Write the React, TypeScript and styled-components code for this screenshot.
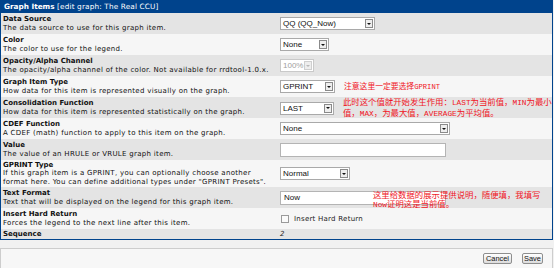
import styled, { createGlobalStyle } from "styled-components";

const GlobalStyle = createGlobalStyle`
  html, body {
    margin: 0;
    padding: 0;
  }
  body {
    width: 554px;
    height: 268px;
    overflow: hidden;
    background: #f1f1f1;
    font-family: "DejaVu Sans", Verdana, sans-serif;
  }
`;

const Page = styled.div`
  display: flex;
  flex-direction: column;
  gap: 8px;
  width: 553px;
  height: 268px;
  overflow: hidden;
`;

const Panel = styled.div`
  border: 1px solid #00438c;
  border-top: 0;
  display: flex;
  flex-direction: column;
`;

const Header = styled.div`
  height: 13px;
  line-height: 13px;
  padding: 0 3px;
  background: #00438c;
  color: #fff;
  font-size: 7.3px;
  letter-spacing: 0.15px;
  white-space: nowrap;

  b {
    font-weight: bold;
    letter-spacing: 0;
  }
`;

const Row = styled.div<{ $alt: boolean; $h: number }>`
  display: grid;
  grid-template-columns: 279px 1fr;
  align-items: center;
  height: ${(p) => p.$h}px;
  overflow: hidden;
  background: ${(p) => (p.$alt ? "#f6f6f6" : "#e4e4e4")};
`;

const LabelCell = styled.div`
  padding: 0 2px;
  font-size: 7px;
  line-height: 8.6px;
  color: #111;
  white-space: nowrap;
`;

const Title = styled.div`
  font-weight: bold;
`;

const Desc = styled.div`
  letter-spacing: 0.3px;
`;

const FieldCell = styled.div`
  position: relative;
  display: flex;
  align-items: center;
  gap: 9px;
  white-space: nowrap;
`;

const Select = styled.div<{ $w: number; $disabled?: boolean }>`
  box-sizing: border-box;
  width: ${(p) => p.$w}px;
  height: 13px;
  padding: 0 1px 0 2px;
  display: flex;
  align-items: center;
  border: 1px solid ${(p) => (p.$disabled ? "#c9c9c9" : "#a9a9a9")};
  background: #fff;
  color: ${(p) => (p.$disabled ? "#a0a0a0" : "#111")};
  font-family: "Liberation Sans", Arial, sans-serif;
  font-size: 8px;
`;

const Arrow = styled.span<{ $disabled?: boolean }>`
  box-sizing: border-box;
  margin-left: auto;
  width: 8px;
  height: 9px;
  display: flex;
  align-items: center;
  justify-content: center;
  border: 1px solid ${(p) => (p.$disabled ? "#cfcfcf" : "#8a8a8a")};
  background: #eeeeee;

  &::after {
    content: "";
    border-left: 2px solid transparent;
    border-right: 2px solid transparent;
    border-top: 2px solid ${(p) => (p.$disabled ? "#b8b8b8" : "#111")};
  }
`;

const TextBox = styled.div<{ $w: number }>`
  box-sizing: border-box;
  width: ${(p) => p.$w}px;
  height: 14px;
  padding: 0 3px;
  display: flex;
  align-items: center;
  border: 1px solid #b4b4b4;
  background: #fff;
  color: #111;
  font-family: "Liberation Sans", Arial, sans-serif;
  font-size: 8px;
`;

const Note = styled.div<{ $size: number }>`
  color: #f0141e;
  font-family: "Noto Sans CJK SC", sans-serif;
  font-size: ${(p) => p.$size}px;
  line-height: ${(p) => p.$size + 0.6}px;

  span {
    font-family: "Liberation Mono", monospace;
    font-size: ${(p) => p.$size - 0.6}px;
  }
`;

const OverNote = styled(Note)`
  position: absolute;
  left: 93px;
  top: -1px;
`;

const Check = styled.span`
  box-sizing: border-box;
  width: 8px;
  height: 8px;
  margin-left: 1px;
  border: 1px solid #9a9a9a;
  background: #fafafa;
`;

const CheckLabel = styled.span`
  margin-left: -4px;
  font-size: 7px;
  letter-spacing: 0.25px;
  color: #222;
`;

const Seq = styled.span`
  font-size: 7px;
  font-style: italic;
  color: #222;
`;

const ButtonBar = styled.div`
  flex: 1;
  padding: 4px 9px 0 0;
  display: flex;
  justify-content: flex-end;
  align-items: flex-start;
  gap: 10px;
  border: 1px solid #cdcdcd;
  border-bottom: 0;
  background: #f7f7f7;
`;

const Button = styled.div<{ $w: number }>`
  box-sizing: border-box;
  width: ${(p) => p.$w}px;
  height: 11px;
  display: flex;
  align-items: center;
  justify-content: center;
  border: 1px solid #8e8e8e;
  border-radius: 2px;
  background: linear-gradient(#ffffff, #dcdcdc);
  font-family: "Liberation Sans", Arial, sans-serif;
  font-size: 7.4px;
  color: #111;
`;

type Item = {
  title: string;
  desc: string[];
  h: number;
  field: React.ReactNode;
};

const items: Item[] = [
  {
    title: "Data Source",
    desc: ["The data source to use for this graph item."],
    h: 21,
    field: (
      <Select $w={95}>
        QQ (QQ_Now)
        <Arrow />
      </Select>
    ),
  },
  {
    title: "Color",
    desc: ["The color to use for the legend."],
    h: 21,
    field: (
      <Select $w={49}>
        None
        <Arrow />
      </Select>
    ),
  },
  {
    title: "Opacity/Alpha Channel",
    desc: ["The opacity/alpha channel of the color. Not available for rrdtool-1.0.x."],
    h: 21,
    field: (
      <Select $w={34} $disabled>
        100%
        <Arrow $disabled />
      </Select>
    ),
  },
  {
    title: "Graph Item Type",
    desc: ["How data for this item is represented visually on the graph."],
    h: 21,
    field: (
      <>
        <Select $w={55}>
          GPRINT
          <Arrow />
        </Select>
        <Note $size={7.8}>
          注意这里一定要选择<span>GPRINT</span>
        </Note>
      </>
    ),
  },
  {
    title: "Consolidation Function",
    desc: ["How data for this item is represented statistically on the graph."],
    h: 21,
    field: (
      <>
        <Select $w={54}>
          LAST
          <Arrow />
        </Select>
        <Note $size={8.4}>
          此时这个值就开始发生作用：<span>LAST</span>为当前值，<span>MIN</span>为最小
          <br />
          值，<span>MAX</span>，为最大值，<span>AVERAGE</span>为平均值。
        </Note>
      </>
    ),
  },
  {
    title: "CDEF Function",
    desc: ["A CDEF (math) function to apply to this item on the graph."],
    h: 21,
    field: (
      <Select $w={170}>
        None
        <Arrow />
      </Select>
    ),
  },
  {
    title: "Value",
    desc: ["The value of an HRULE or VRULE graph item."],
    h: 21,
    field: <TextBox $w={166} />,
  },
  {
    title: "GPRINT Type",
    desc: [
      "If this graph item is a GPRINT, you can optionally choose another",
      'format here. You can define additional types under "GPRINT Presets".',
    ],
    h: 27,
    field: (
      <Select $w={70}>
        Normal
        <Arrow />
      </Select>
    ),
  },
  {
    title: "Text Format",
    desc: ["Text that will be displayed on the legend for this graph item."],
    h: 21,
    field: (
      <>
        <TextBox $w={166}>Now</TextBox>
        <OverNote $size={8.4}>
          这里给数据的展示提供说明，随便填，我填写
          <br />
          <span>Now</span>证明这是当前值。
        </OverNote>
      </>
    ),
  },
  {
    title: "Insert Hard Return",
    desc: ["Forces the legend to the next line after this item."],
    h: 21,
    field: (
      <>
        <Check />
        <CheckLabel>Insert Hard Return</CheckLabel>
      </>
    ),
  },
  {
    title: "Sequence",
    desc: [],
    h: 10,
    field: <Seq>2</Seq>,
  },
];

export default function App() {
  return (
    <>
      <GlobalStyle />
      <Page>
        <Panel>
          <Header>
            <b>Graph Items</b> [edit graph: The Real CCU]
          </Header>
          {items.map((it, i) => (
            <Row key={it.title} $alt={i % 2 === 1} $h={it.h}>
              <LabelCell>
                <Title>{it.title}</Title>
                {it.desc.map((d) => (
                  <Desc key={d}>{d}</Desc>
                ))}
              </LabelCell>
              <FieldCell>{it.field}</FieldCell>
            </Row>
          ))}
        </Panel>
        <ButtonBar>
          <Button $w={29}>Cancel</Button>
          <Button $w={21}>Save</Button>
        </ButtonBar>
      </Page>
    </>
  );
}
